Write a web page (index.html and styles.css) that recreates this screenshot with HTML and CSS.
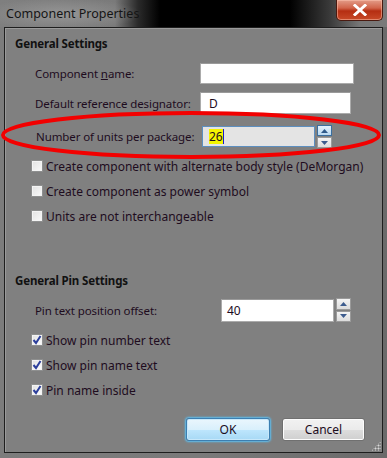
FILE: index.html
```html
<!DOCTYPE html>
<html>
<head>
<meta charset="utf-8">
<link rel="stylesheet" href="styles.css">
</head>
<body>
<div class="window">
  <div class="titlebar">
    <span class="title">Component Properties</span>
    <div class="close"><svg width="16" height="12" viewBox="0 0 16 12"><path d="M3 1.5 L13 10.5 M13 1.5 L3 10.5" stroke="#fff" stroke-width="3" stroke-linecap="square"/></svg></div>
  </div>
  <div class="client">
    <div class="heading">General Settings</div>
    <div class="row r1">
      <span class="label">Component <u>n</u>ame:</span>
      <div class="input w154"></div>
    </div>
    <div class="row r2">
      <span class="label">Default reference designator:</span>
      <div class="input w151 pad8">D</div>
    </div>
    <div class="row r3">
      <span class="label">Number of units per package:</span>
      <div class="input focus w113"><span class="sel">26</span><span class="caret"></span></div>
      <div class="spin">
        <div class="sbtn up hot"><svg width="7" height="4" viewBox="0 0 7 4"><path d="M0 4 L3.5 0 L7 4Z" fill="#2f5a8a"/></svg></div>
        <div class="sbtn down"><svg width="7" height="4" viewBox="0 0 7 4"><path d="M0 0 L3.5 4 L7 0Z" fill="#3d5c8e"/></svg></div>
      </div>
    </div>
    <div class="check c1"><span class="box"></span><span>Create component with alternate body style (DeMorgan)</span></div>
    <div class="check"><span class="box"></span><span>Create component as power symbol</span></div>
    <div class="check"><span class="box"></span><span>Units are not interchangeable</span></div>

    <div class="heading pin">General Pin Settings</div>
    <div class="row r4">
      <span class="label wide">Pin text position offset:</span>
      <div class="input w113 tall">40</div>
      <div class="spin">
        <div class="sbtn up"><svg width="7" height="4" viewBox="0 0 7 4"><path d="M0 4 L3.5 0 L7 4Z" fill="#3d5c8e"/></svg></div>
        <div class="sbtn down"><svg width="7" height="4" viewBox="0 0 7 4"><path d="M0 0 L3.5 4 L7 0Z" fill="#3d5c8e"/></svg></div>
      </div>
    </div>
    <div class="check c4"><span class="box on"><svg width="10" height="10" viewBox="0 0 10 10"><path d="M1.5 5 L4 8 L8.5 1" stroke="#2c3f9c" stroke-width="2" fill="none"/></svg></span><span>Show pin number text</span></div>
    <div class="check"><span class="box on"><svg width="10" height="10" viewBox="0 0 10 10"><path d="M1.5 5 L4 8 L8.5 1" stroke="#2c3f9c" stroke-width="2" fill="none"/></svg></span><span>Show pin name text</span></div>
    <div class="check"><span class="box on"><svg width="10" height="10" viewBox="0 0 10 10"><path d="M1.5 5 L4 8 L8.5 1" stroke="#2c3f9c" stroke-width="2" fill="none"/></svg></span><span>Pin name inside</span></div>

    <div class="buttons">
      <button class="btn ok">OK</button>
      <button class="btn">Cancel</button>
    </div>
    <div class="grip"></div>
  </div>
  <svg class="ellipse" width="387" height="60" viewBox="0 0 387 60"><ellipse cx="191" cy="28" rx="188" ry="22" fill="none" stroke="#f20000" stroke-width="4"/></svg>
</div>
</body>
</html>
```
FILE: styles.css
```css
* { box-sizing: border-box; }
html, body { margin: 0; padding: 0; }
body {
  width: 387px; height: 458px; overflow: hidden;
  font-family: "Noto Sans", "Open Sans", sans-serif;
  font-size: 11.5px;
  letter-spacing: -0.1px;
  color: #1e0c1e;
  background: #6f6f6f;
}
.window {
  position: relative;
  width: 387px; height: 458px;
  display: flex; flex-direction: column;
  background: linear-gradient(to right, #7c7c7c 0, #7a7a7a 200px, #6a6a6a 387px);
  padding: 0 4px 5px 4px;
}
.titlebar {
  height: 27px;
  margin: 0 -4px;
  display: flex; align-items: flex-start; justify-content: space-between;
  background:
    radial-gradient(ellipse 80px 16px at 62px 14px, rgba(170,170,170,0.55), rgba(170,170,170,0) 100%),
    linear-gradient(to right, #7f7f7f 0, #7a7a7a 115px, #2a2a2a 138px, #000 160px, #000 290px, #3a3a3a 330px, #777 360px, #7a7a7a 387px);
}
.title {
  margin: 6px 0 0 6px;
  font-size: 12.5px;
  letter-spacing: 0;
  color: #151515;
  line-height: 16px;
}
.close {
  width: 47px; height: 21px;
  margin: 0 4px 0 0;
  border: 1px solid #4a1a10;
  border-top: none;
  border-radius: 0 0 5px 5px;
  background: linear-gradient(to bottom, #e39c88 0, #d1644a 40%, #b52e12 55%, #c84a28 100%);
  box-shadow: inset 0 0 0 1px rgba(255,200,180,0.5);
  display: flex; align-items: center; justify-content: center;
}
.client {
  flex: 1;
  position: relative;
  background: #808080;
  border: 1px solid #1e1e1e;
  box-shadow: inset 1px 1px 0 #9a9a9a;
  padding: 8px 0 0 10px;
  display: flex; flex-direction: column;
}
.heading {
  font-weight: bold;
  line-height: 16px; height: 16px;
  color: #111;
  font-size: 11.5px;
  letter-spacing: -0.15px;
}
.heading.pin { margin-top: 49px; }
.row {
  display: flex; align-items: center;
  padding-left: 20px;
  height: 22px;
}
.r1 { margin-top: 10px; }
.r2 { margin-top: 8px; }
.r3 { margin-top: 11px; height: 23px; }
.r4 { margin-top: 9px; height: 24px; }
.label { width: 165px; flex: none; white-space: nowrap; }
.label.wide { width: 186px; }
.r3 .label { width: 167px; padding-left: 1px; }
.input {
  height: 22px;
  background: #fff;
  border: 1px solid #ababab;
  border-top-color: #9a9a9a;
  padding: 0 5px;
  display: flex; align-items: center;
  font-size: 12px;
}
.pad8 { padding-left: 8px; }
.tall { height: 23px; }
.w154 { width: 154px; height: 21px; }
.w151 { width: 151px; }
.w113 { width: 113px; }
.input.focus {
  height: 21px;
  background: #e4e4e4;
  border-color: #5d8fc0;
  padding-left: 6px;
}
.sel { background: #f4f400; line-height: 15px; }
.caret { width: 1px; height: 15px; background: #1a1ad0; }
.spin {
  margin-left: 2px;
  display: flex; flex-direction: column; gap: 1px;
  height: 100%;
}
.sbtn {
  width: 15px; flex: 1;
  border: 1px solid #9a9a9a;
  background: linear-gradient(#f4f4f4, #dcdcdc);
  display: flex; align-items: center; justify-content: center;
}
.sbtn.hot {
  border-color: #3a6e9f;
  background: linear-gradient(#e3f1fb, #b9d8f0);
}
.check {
  display: flex; align-items: center; gap: 3px;
  padding-left: 16px;
  height: 16px;
  margin-top: 9px;
  font-size: 12px;
  letter-spacing: 0;
}
.c1 { margin-top: 10px; }
.c4 { margin-top: 10px; }
.box {
  width: 12px; height: 12px; flex: none;
  border: 1px solid #8e8f8f;
  background: linear-gradient(135deg, #e2e2e2, #fafafa);
  box-shadow: inset 0 0 0 1px #f4f4f4;
  display: flex; align-items: center; justify-content: center;
}
.box.on { background: linear-gradient(135deg, #e0e0e0, #ffffff); }
.buttons {
  margin-top: 20px;
  display: flex; justify-content: flex-end; gap: 12px;
  padding-right: 17px;
}
.btn {
  height: 23px;
  width: 83px;
  font-family: "Noto Sans", sans-serif;
  font-size: 12px;
  color: #1c0c1c;
  border: 1px solid #707070;
  border-radius: 3px;
  background: linear-gradient(to bottom, #f2f2f2 0, #ebebeb 50%, #dddddd 51%, #cfcfcf 100%);
  box-shadow: inset 0 0 0 1px #fcfcfc;
  padding: 0;
}
.btn.ok {
  width: 84px;
  border-color: #3c7fb1;
  background: linear-gradient(to bottom, #eaf6fd 0, #d9f0fc 50%, #bee6fd 51%, #a7d9f5 100%);
  box-shadow: inset 0 0 0 1px #c8e8fa, 0 0 2px 1px #5bbef0;
}
.grip {
  position: absolute; right: 1px; bottom: 1px;
  width: 10px; height: 10px;
  background:
    radial-gradient(circle, #d8d8d8 0.8px, transparent 1.2px) 0 0 / 3px 3px;
  clip-path: polygon(100% 0, 100% 100%, 0 100%);
}
.ellipse {
  position: absolute; left: 0; top: 107px;
  pointer-events: none;
}
```
